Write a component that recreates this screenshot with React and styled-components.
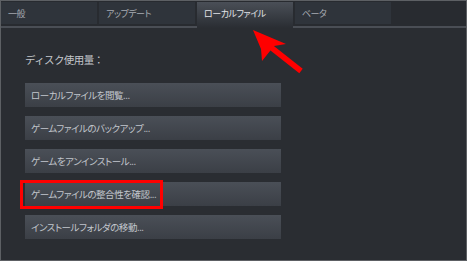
import React from 'react';
import styled, { createGlobalStyle } from 'styled-components';

const GlobalStyle = createGlobalStyle`
  html, body {
    margin: 0;
    padding: 0;
    background: #2a2d32;
  }
  body {
    font-family: "Noto Sans CJK JP", "Noto Sans", sans-serif;
    font-feature-settings: "palt";
  }
`;

const Frame = styled.div`
  position: relative;
  box-sizing: border-box;
  width: 467px;
  height: 261px;
  border: 1px solid #5d6064;
  background: #2a2d32;
  overflow: hidden;
`;

const TabBar = styled.div`
  display: flex;
  gap: 2px;
  padding-top: 1px;
  height: 24px;
  background: #282b30;
  border-bottom: 2px solid #4a4e55;
`;

const Tab = styled.div`
  box-sizing: border-box;
  width: 96px;
  height: ${p => (p.$active ? '26px' : '22px')};
  padding-left: 7px;
  padding-bottom: ${p => (p.$active ? '4px' : '0')};
  display: flex;
  align-items: center;
  font-size: 9px;
  letter-spacing: -0.5px;
  color: ${p => (p.$active ? '#e2e4e8' : '#a7abb2')};
  background: ${p =>
    p.$active
      ? 'linear-gradient(#4a4f57, #30343a 80%, #2a2d32)'
      : '#2f343b'};
  position: relative;
  z-index: 1;
`;

const Body = styled.div`
  padding: 22px 0 0 24px;
`;

const Heading = styled.div`
  font-size: 10.5px;
  letter-spacing: -0.6px;
  font-feature-settings: normal;
  color: #c3c6cb;
  height: 20px;
  line-height: 20px;
  margin-bottom: 13px;
`;

const ButtonList = styled.div`
  display: flex;
  flex-direction: column;
  gap: 9px;
`;

const ActionButton = styled.div`
  position: relative;
  box-sizing: border-box;
  width: 256px;
  height: 24px;
  padding-left: 6px;
  display: flex;
  align-items: center;
  font-size: 9.5px;
  letter-spacing: -0.45px;
  color: #c2c6cd;
  background: linear-gradient(#4a4f57, #3b3f46);

  ${p =>
    p.$marked &&
    `
    &::after {
      content: '';
      position: absolute;
      left: -5px;
      top: -2px;
      width: 143px;
      height: 29px;
      box-sizing: border-box;
      border: 3px solid #f00;
    }
  `}
`;

const Arrow = styled.svg`
  position: absolute;
  left: 248px;
  top: 25px;
  z-index: 2;
`;

const actions = [
  'ローカルファイルを閲覧...',
  'ゲームファイルのバックアップ...',
  'ゲームをアンインストール...',
  'ゲームファイルの整合性を確認...',
  'インストールフォルダの移動...',
];

export default function App() {
  return (
    <>
      <GlobalStyle />
      <Frame>
        <TabBar>
          <Tab>一般</Tab>
          <Tab>アップデート</Tab>
          <Tab $active>ローカルファイル</Tab>
          <Tab>ベータ</Tab>
        </TabBar>
        <Body>
          <Heading>ディスク使用量：</Heading>
          <ButtonList>
            {actions.map((label, i) => (
              <ActionButton key={label} $marked={i === 3}>
                {label}
              </ActionButton>
            ))}
          </ButtonList>
        </Body>
        <Arrow width="60" height="52" viewBox="248 25 60 52">
          <line x1="300" y1="70" x2="262" y2="40" stroke="#ff0000" strokeWidth="5.5" />
          <polygon points="252,29 285,43 273,45 261,60 260,48" fill="#ff0000" />
        </Arrow>
      </Frame>
    </>
  );
}
